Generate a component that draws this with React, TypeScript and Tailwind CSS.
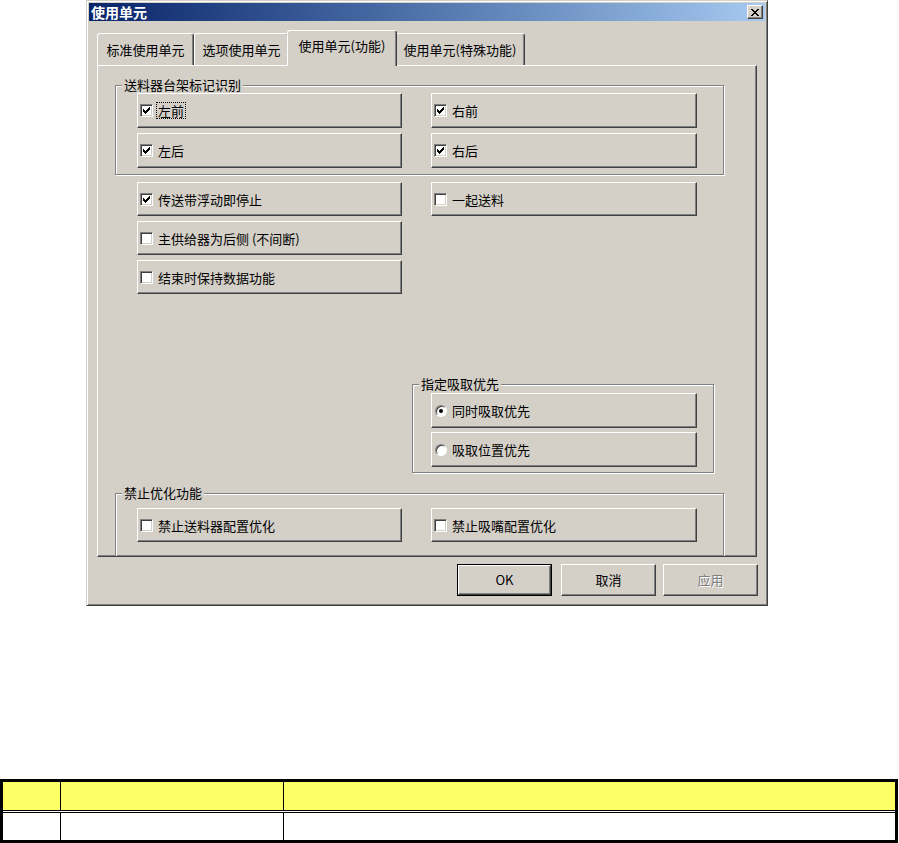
import React from "react"

// classic 3D bevels
const RAISED =
  "border border-t-white border-l-white border-r-[#404040] border-b-[#404040] shadow-[inset_-1px_-1px_0_#808080]"
const ETCHED = "border border-[#808080] shadow-[inset_1px_1px_0_#fff,1px_1px_0_#fff]"

function CheckMark() {
  return (
    <svg width="7" height="7" viewBox="0 0 7 7" shapeRendering="crispEdges">
      <path
        d="M0 2h1v3h-1z M1 3h1v3h-1z M2 4h1v3h-1z M3 3h1v3h-1z M4 2h1v3h-1z M5 1h1v3h-1z M6 0h1v3h-1z"
        fill="#000"
      />
    </svg>
  )
}

function CheckBox({ checked }: { checked?: boolean }) {
  return (
    <span className="flex h-[13px] w-[13px] shrink-0 items-center justify-center border border-t-[#808080] border-l-[#808080] border-r-white border-b-white bg-white shadow-[inset_1px_1px_0_#404040,inset_-1px_-1px_0_#d4d0c8]">
      {checked && <CheckMark />}
    </span>
  )
}

function Radio({ checked }: { checked?: boolean }) {
  return (
    <span className="flex h-[12px] w-[12px] shrink-0 items-center justify-center rounded-full border border-t-[#808080] border-l-[#808080] border-r-white border-b-white bg-white shadow-[inset_1px_1px_0_#404040]">
      {checked && <span className="h-[4px] w-[4px] rounded-full bg-black" />}
    </span>
  )
}

function CheckButton({
  label,
  checked,
  focused,
  h = "h-[35px]",
}: {
  label: string
  checked?: boolean
  focused?: boolean
  h?: string
}) {
  return (
    <div className={`flex items-center pl-[2px] ${h} ${RAISED}`}>
      <CheckBox checked={checked} />
      {focused ? (
        <span className="ml-[3px] border border-dotted border-black px-[1px] leading-[15px]">{label}</span>
      ) : (
        <span className="ml-[5px] leading-[17px]">{label}</span>
      )}
    </div>
  )
}

function RadioButton({ label, checked }: { label: string; checked?: boolean }) {
  return (
    <div className={`flex h-[35px] items-center pl-[3px] ${RAISED}`}>
      <Radio checked={checked} />
      <span className="ml-[5px] leading-[17px]">{label}</span>
    </div>
  )
}

function Group({
  title,
  className,
  children,
}: {
  title: string
  className: string
  children?: React.ReactNode
}) {
  return (
    <div className={`relative shrink-0 ${ETCHED} ${className}`}>
      <span className="absolute -top-[9px] left-[6px] bg-[#d4d0c8] px-[2px] leading-[16px]">{title}</span>
      {children}
    </div>
  )
}

function Tab({ label, width, active }: { label: string; width: string; active?: boolean }) {
  if (active) {
    return (
      <div
        className={`relative z-10 -mx-[2px] -mb-[1px] flex h-[36px] items-center justify-center rounded-t-[3px] border-t border-l border-r border-t-white border-l-white border-r-[#404040] bg-[#d4d0c8] pb-[6px] shadow-[inset_-1px_0_0_#808080] ${width}`}
      >
        {label}
      </div>
    )
  }
  return (
    <div
      className={`flex h-[32px] items-center justify-center rounded-t-[3px] border-t border-l border-r border-t-white border-l-white border-r-[#404040] shadow-[inset_-1px_0_0_#808080] ${width}`}
    >
      {label}
    </div>
  )
}

function DialogButton({ label, isDefault, disabled }: { label: string; isDefault?: boolean; disabled?: boolean }) {
  const text = disabled ? "text-[#808080] [text-shadow:1px_1px_0_#fff]" : "text-black"
  if (isDefault) {
    return (
      <div className="h-[32px] w-[95px] border border-black">
        <div className={`flex h-full w-full items-center justify-center ${RAISED} ${text}`}>{label}</div>
      </div>
    )
  }
  return <div className={`flex h-[32px] w-[95px] items-center justify-center ${RAISED} ${text}`}>{label}</div>
}

export default function App() {
  return (
    <div className="h-[843px] w-[899px] overflow-hidden bg-white font-['Noto_Sans_CJK_SC',sans-serif] text-[13px] text-black">
      {/* dialog window */}
      <div className="ml-[86px] flex h-[606px] w-[682px] flex-col border border-t-[#d4d0c8] border-l-[#d4d0c8] border-r-[#404040] border-b-[#404040] bg-[#d4d0c8] p-[2px] shadow-[inset_1px_1px_0_#fff,inset_-1px_-1px_0_#808080]">
        {/* title bar */}
        <div className="flex h-[18px] shrink-0 items-center justify-between bg-gradient-to-r from-[#0a246a] to-[#a6caf0] pl-[2px] pr-[2px]">
          <span className="text-[14px] leading-[18px] font-bold text-white">使用单元</span>
          <div className={`flex h-[14px] w-[16px] items-center justify-center bg-[#d4d0c8] ${RAISED}`}>
            <svg width="8" height="7" viewBox="0 0 8 7" shapeRendering="crispEdges">
              <path
                d="M0 0h2v1h-2z M6 0h2v1h-2z M1 1h2v1h-2z M5 1h2v1h-2z M2 2h4v1h-4z M3 3h2v1h-2z M2 4h4v1h-4z M1 5h2v1h-2z M5 5h2v1h-2z M0 6h2v1h-2z M6 6h2v1h-2z"
                fill="#000"
              />
            </svg>
          </div>
        </div>

        <div className="flex flex-col px-[8px]">
          {/* tabs */}
          <div className="mt-[9px] flex h-[35px] items-end">
            <Tab label="标准使用单元" width="w-[97px]" />
            <Tab label="选项使用单元" width="w-[95px]" />
            <Tab label="使用单元(功能)" width="w-[110px]" active />
            <Tab label="使用单元(特殊功能)" width="w-[130px]" />
          </div>

          {/* tab panel */}
          <div className={`flex h-[492px] w-[660px] flex-col overflow-hidden pl-[17px] pt-[19px] ${RAISED}`}>
            <Group title="送料器台架标记识别" className="h-[90px] w-[609px] pl-[21px] pt-[7px]">
              <div className="grid grid-cols-[265px_266px] gap-x-[29px] gap-y-[5px]">
                <CheckButton label="左前" checked focused />
                <CheckButton label="右前" checked />
                <CheckButton label="左后" checked />
                <CheckButton label="右后" checked />
              </div>
            </Group>

            <div className="mt-[7px] ml-[22px] grid grid-cols-[265px_266px] gap-x-[29px] gap-y-[5px]">
              <CheckButton label="传送带浮动即停止" checked h="h-[34px]" />
              <CheckButton label="一起送料" h="h-[34px]" />
              <CheckButton label="主供给器为后侧 (不间断)" h="h-[34px]" />
              <div />
              <CheckButton label="结束时保持数据功能" h="h-[34px]" />
            </div>

            <Group title="指定吸取优先" className="mt-[90px] ml-[297px] h-[89px] w-[302px] pl-[18px] pt-[8px]">
              <div className="flex w-[266px] flex-col gap-[4px]">
                <RadioButton label="同时吸取优先" checked />
                <RadioButton label="吸取位置优先" />
              </div>
            </Group>

            <Group title="禁止优化功能" className="mt-[20px] h-[90px] w-[609px] pl-[21px] pt-[14px]">
              <div className="grid grid-cols-[265px_266px] gap-x-[29px]">
                <CheckButton label="禁止送料器配置优化" h="h-[34px]" />
                <CheckButton label="禁止吸嘴配置优化" h="h-[34px]" />
              </div>
            </Group>
          </div>

          {/* footer buttons */}
          <div className="-mr-[1px] mt-[7px] flex justify-end">
            <DialogButton label="OK" isDefault />
            <div className="ml-[9px]">
              <DialogButton label="取消" />
            </div>
            <div className="ml-[7px]">
              <DialogButton label="应用" disabled />
            </div>
          </div>
        </div>
      </div>

      {/* empty table */}
      <div className="mt-[173px] w-[898px] border-[3px] border-black">
        <div className="flex h-[28px] bg-[#ffff66]">
          <div className="w-[58px] border-r border-black" />
          <div className="w-[223px] border-r border-black" />
          <div className="flex-1" />
        </div>
        <div className="h-[3px] border-y border-black bg-white" />
        <div className="flex h-[27px] bg-white">
          <div className="w-[58px] border-r border-black" />
          <div className="w-[223px] border-r border-black" />
          <div className="flex-1" />
        </div>
      </div>
    </div>
  )
}
